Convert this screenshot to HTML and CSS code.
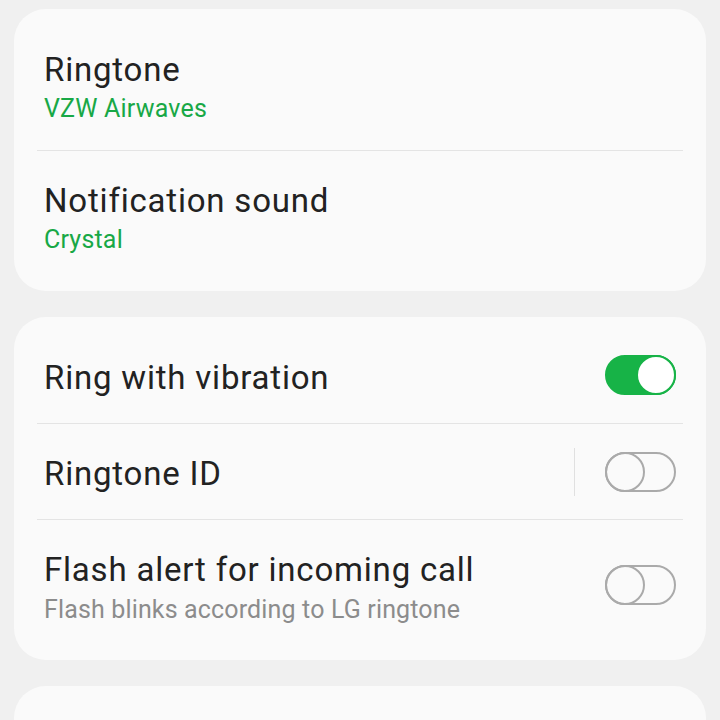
FILE: index.html
```html
<!DOCTYPE html>
<html lang="en">
	<head>
		<meta charset="utf-8">
		<title>Sound settings</title>
		<link rel="stylesheet" href="styles.css">
	</head>
	<body>
		<div class="card">
			<div class="row tall">
				<div class="text">
					<div class="title">Ringtone</div>
					<div class="sub green">VZW Airwaves</div>
				</div>
			</div>
			<div class="row tall">
				<div class="text">
					<div class="title">Notification sound</div>
					<div class="sub green">Crystal</div>
				</div>
			</div>
		</div>

		<div class="card">
			<div class="row">
				<div class="text">
					<div class="title">Ring with vibration</div>
				</div>
				<div class="switch on"><span class="knob"></span></div>
			</div>
			<div class="row">
				<div class="text">
					<div class="title">Ringtone ID</div>
				</div>
				<div class="vsep"></div>
				<div class="switch"><span class="knob"></span></div>
			</div>
			<div class="row tall">
				<div class="text">
					<div class="title">Flash alert for incoming call</div>
					<div class="sub gray">Flash blinks according to LG ringtone</div>
				</div>
				<div class="switch"><span class="knob"></span></div>
			</div>
		</div>

		<div class="card last"></div>
	</body>
</html>
```

FILE: styles.css
```css
body {
	margin: 0;
	padding: 9px 14px 0;
	background: #f0f0f0;
	font-family: Roboto, "Noto Sans", sans-serif;
	color: #222;
	overflow: hidden;
	height: 711px;
}

.card {
	background: #fafafa;
	border-radius: 32px;
	padding: 10px 23px;
	margin-bottom: 26px;
}

.card.last {
	height: 60px;
}

.row {
	display: flex;
	align-items: center;
	height: 95px;
	padding: 0 5px 0 7px;
	border-top: 1px solid #e4e4e4;
}

.row:first-child {
	border-top: none;
	height: 96px;
}

.row.tall {
	height: 130px;
}

.row.tall:first-child {
	height: 131px;
}

.text {
	flex: 1;
	padding-top: 5px;
}

.title {
	font-size: 33px;
	line-height: 38px;
	letter-spacing: 0.8px;
}

.sub {
	font-size: 25px;
	line-height: 30px;
	margin-top: 5px;
}

.green {
	color: #18a846;
	letter-spacing: 0.2px;
}

.gray {
	color: #8c8c8c;
	letter-spacing: 0.15px;
	margin-top: 6px;
}

.vsep {
	width: 1px;
	height: 48px;
	background: #e0e0e0;
	margin-right: 30px;
}

.switch {
	position: relative;
	width: 71px;
	height: 40px;
	box-sizing: border-box;
	border: 2px solid #aaa;
	border-radius: 20px;
	margin-right: 2px;
}

.switch .knob {
	position: absolute;
	left: -2px;
	top: -2px;
	width: 40px;
	height: 40px;
	box-sizing: border-box;
	border: 2px solid #aaa;
	border-radius: 50%;
}

.switch.on {
	background: #17b347;
	border-color: #17b347;
}

.switch.on .knob {
	left: auto;
	right: -2px;
	background: #fff;
	border-color: #17b347;
}
```
